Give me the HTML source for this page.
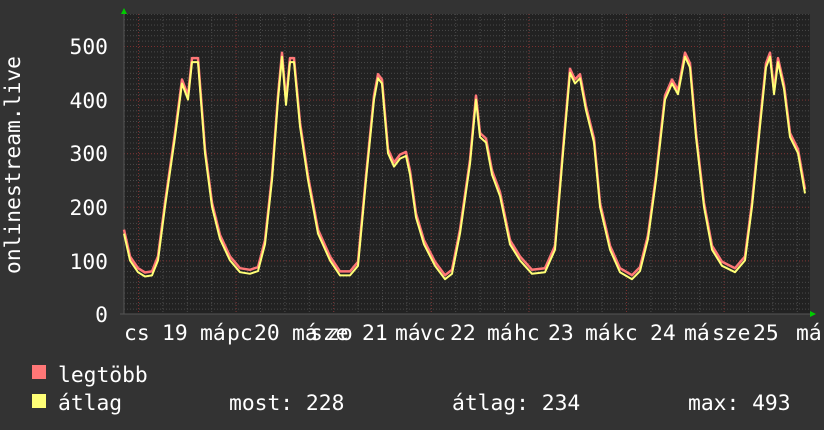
<!DOCTYPE html>
<html><head><meta charset="utf-8"><style>
html,body{margin:0;padding:0;background:#333;width:824px;height:430px;overflow:hidden}
svg text{font-family:"DejaVu Sans Mono","Liberation Mono",monospace;fill:#fff;font-size:21.3px}
</style></head><body>
<svg width="824" height="430" xmlns="http://www.w3.org/2000/svg">
<rect width="824" height="430" fill="#333"/>
<rect x="124" y="14" width="686" height="300" fill="#222"/>
<defs>
<pattern id="hm" x="124" y="314" width="686" height="5.36" patternUnits="userSpaceOnUse">
<line x1="0" y1="0.5" x2="686" y2="0.5" stroke="#4a4a4a" stroke-dasharray="1,2"/>
</pattern>
<pattern id="vm" x="138" y="14" width="24.4" height="300" patternUnits="userSpaceOnUse">
<line x1="0.5" y1="0" x2="0.5" y2="300" stroke="#4a4a4a" stroke-dasharray="1,2"/>
</pattern>
<pattern id="vM" x="138" y="14" width="97.6" height="300" patternUnits="userSpaceOnUse">
<line x1="0.5" y1="0" x2="0.5" y2="300" stroke="#7a2f2f" stroke-dasharray="1,2"/>
</pattern>
<pattern id="hM" x="124" y="46" width="686" height="53.6" patternUnits="userSpaceOnUse">
<line x1="0" y1="0.5" x2="686" y2="0.5" stroke="#7a2f2f" stroke-dasharray="1,2"/>
</pattern>
</defs>
<rect x="124" y="14" width="686" height="300" fill="url(#hm)"/>
<rect x="124" y="14" width="686" height="300" fill="url(#vm)"/>
<rect x="124" y="14" width="686" height="300" fill="url(#vM)"/>
<rect x="124" y="40" width="686" height="274" fill="url(#hM)"/>
<line x1="124" y1="12" x2="124" y2="314" stroke="#555"/>
<line x1="120" y1="314" x2="812" y2="314" stroke="#555"/>
<polygon points="121,14 127,14 124,8" fill="#0c0"/>
<polygon points="810,311 810,317 816,314" fill="#0c0"/>
<g fill="none" stroke-linejoin="round">
<polyline transform="translate(0,-4)" stroke="#f77" stroke-width="2.5" points="124,233.6 130,260.4 138,272.2 145,276.5 152,275.4 158,260.4 165,206.8 175,137.1 182,83.5 188,99.6 192,62.1 198,62.1 205,153.2 212,206.8 220,239 230,260.4 240,272.2 250,273.8 258,271.1 265,244.3 272,180 278,99.6 282,56.7 286,104.9 290,62.1 294,62.1 300,126.4 308,180 318,233.6 330,260.4 340,275.4 350,275.4 358,265.8 366,180 374,99.6 378,78.2 382,83.5 388,153.2 394,166.6 400,158.6 406,155.9 410,174.6 416,217.5 424,244.3 435,265.8 445,279.2 452,273.8 460,233.6 470,163.9 476,99.6 480,137.1 486,142.5 492,174.6 500,196.1 510,244.3 520,260.4 532,273.8 545,272.2 555,249.7 563,153.2 570,72.8 575,83.5 580,78.2 586,110.3 594,142.5 600,206.8 610,249.7 620,272.2 632,279.2 640,271.1 648,239 656,180 665,99.6 672,83.5 678,94.2 685,56.7 690,67.4 696,137.1 704,206.8 712,249.7 722,265.8 735,272.2 745,260.4 752,206.8 760,126.4 766,67.4 770,56.7 774,94.2 778,62.1 784,88.9 790,137.1 798,153.2 805,193.4"/>
<polyline stroke="#ff7" stroke-width="2" points="124,233.6 130,260.4 138,272.2 145,276.5 152,275.4 158,260.4 165,206.8 175,137.1 182,83.5 188,99.6 192,62.1 198,62.1 205,153.2 212,206.8 220,239 230,260.4 240,272.2 250,273.8 258,271.1 265,244.3 272,180 278,99.6 282,56.7 286,104.9 290,62.1 294,62.1 300,126.4 308,180 318,233.6 330,260.4 340,275.4 350,275.4 358,265.8 366,180 374,99.6 378,78.2 382,83.5 388,153.2 394,166.6 400,158.6 406,155.9 410,174.6 416,217.5 424,244.3 435,265.8 445,279.2 452,273.8 460,233.6 470,163.9 476,99.6 480,137.1 486,142.5 492,174.6 500,196.1 510,244.3 520,260.4 532,273.8 545,272.2 555,249.7 563,153.2 570,72.8 575,83.5 580,78.2 586,110.3 594,142.5 600,206.8 610,249.7 620,272.2 632,279.2 640,271.1 648,239 656,180 665,99.6 672,83.5 678,94.2 685,56.7 690,67.4 696,137.1 704,206.8 712,249.7 722,265.8 735,272.2 745,260.4 752,206.8 760,126.4 766,67.4 770,56.7 774,94.2 778,62.1 784,88.9 790,137.1 798,153.2 805,193.4"/>
</g>
<g text-anchor="end">
<text x="108" y="54">500</text>
<text x="108" y="108">400</text>
<text x="108" y="161">300</text>
<text x="108" y="215">200</text>
<text x="108" y="269">100</text>
<text x="108" y="322">0</text>
</g>
<text transform="translate(20,165) rotate(-90)" text-anchor="middle">onlinestream.live</text>
<g>
<text x="124" y="340">cs</text><text x="162" y="340">19</text><text x="200" y="340">má</text><text x="227" y="340">pc</text><text x="254" y="340">20</text>
<text x="292" y="340">má</text><text x="310" y="340">sze</text><text x="327" y="340">zo</text><text x="362" y="340">21</text>
<text x="395" y="340">má</text><text x="420" y="340">vc</text><text x="450" y="340">22</text><text x="487" y="340">má</text><text x="514" y="340">hc</text><text x="548" y="340">23</text>
<text x="585" y="340">má</text><text x="612" y="340">kc</text><text x="650" y="340">24</text><text x="684" y="340">má</text><text x="712" y="340">sze</text><text x="753" y="340">25</text><text x="796" y="340">má</text>
</g>
<rect x="32" y="365" width="14" height="14" fill="#f77"/>
<rect x="32" y="394" width="14" height="14" fill="#ff7"/>
<text x="58" y="382">legtöbb</text>
<text x="58" y="410">átlag</text>
<text x="229" y="410">most: 228</text>
<text x="452" y="410">átlag: 234</text>
<text x="688" y="410">max: 493</text>
</svg>
</body></html>
